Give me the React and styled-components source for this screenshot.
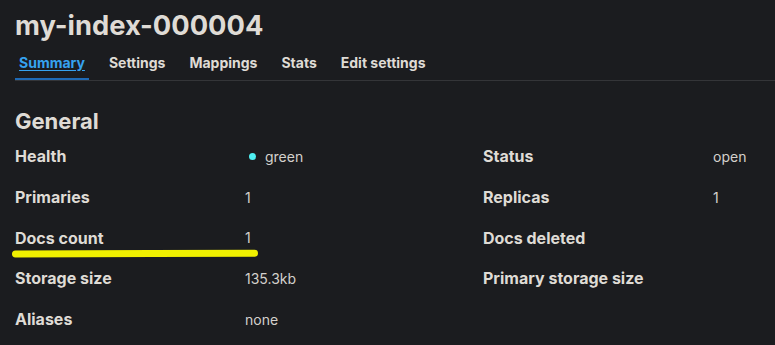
import React from 'react';
import styled, { createGlobalStyle } from 'styled-components';

const GlobalStyle = createGlobalStyle`
    body {
        margin: 0;
        background: #1b1c1f;
        font-family: Inter, "Liberation Sans", sans-serif;
        color: #dfdbd5;
    }
`;

const Page = styled.div`
    position: relative;
    padding: 9px 0 0 15px;
    height: 345px;
    box-sizing: border-box;
    overflow: hidden;
`;

const Title = styled.h1`
    margin: 0;
    font-size: 27.3px;
    line-height: 34px;
    font-weight: 700;
    color: #dfdbd5;
`;

const Tabs = styled.div`
    display: flex;
    gap: 16px;
    margin-top: 1px;
    border-bottom: 1px solid #343538;
`;

const Tab = styled.div`
    padding: 0 4px;
    height: 36px;
    display: flex;
    align-items: center;
    font-size: 14px;
    font-weight: 700;
    color: ${p => (p.$active ? '#36a2ef' : '#dfdbd5')};
    text-decoration: ${p => (p.$active ? 'underline' : 'none')};
    text-underline-offset: 2px;
    box-shadow: ${p => (p.$active ? 'inset 0 -2px 0 #1f6ab5' : 'none')};
`;

const SectionTitle = styled.h2`
    margin: 26px 0 0;
    font-size: 22px;
    line-height: 28px;
    font-weight: 700;
    color: #dfdbd5;
`;

const Grid = styled.div`
    display: grid;
    grid-template-columns: 230px 238px 230px auto;
    grid-auto-rows: 40.7px;
    margin-top: 1px;
    align-items: center;
`;

const Label = styled.div`
    font-size: 16px;
    font-weight: 700;
    color: #dfdbd5;
`;

const Value = styled.div`
    font-size: 14px;
    font-weight: 400;
    color: #d4d1cc;
    display: flex;
    align-items: center;
    gap: 9px;
`;

const Dot = styled.span`
    width: 7px;
    height: 7px;
    border-radius: 50%;
    background: #4ff0f2;
    margin-left: 4px;
`;

const Marker = styled.svg`
    position: absolute;
    left: 0;
    top: 244px;
    pointer-events: none;
`;

const rows = [
    ['Health', <><Dot /> green</>, 'Status', 'open'],
    ['Primaries', '1', 'Replicas', '1'],
    ['Docs count', '1', 'Docs deleted', ''],
    ['Storage size', '135.3kb', 'Primary storage size', ''],
    ['Aliases', 'none', '', ''],
];

const App = () => {
    return (
        <Page>
            <GlobalStyle />
            <Title>my-index-000004</Title>
            <Tabs>
                <Tab $active>Summary</Tab>
                <Tab>Settings</Tab>
                <Tab>Mappings</Tab>
                <Tab>Stats</Tab>
                <Tab>Edit settings</Tab>
            </Tabs>
            <SectionTitle>General</SectionTitle>
            <Grid>
                {rows.map((r, i) => (
                    <React.Fragment key={i}>
                        <Label>{r[0]}</Label>
                        <Value>{r[1]}</Value>
                        <Label>{r[2]}</Label>
                        <Value>{r[3]}</Value>
                    </React.Fragment>
                ))}
            </Grid>
            {/* highlighter stroke over docs count */}
            <Marker width="270" height="20" viewBox="0 0 270 20">
                <path d="M15.5 10 C 80 9.6, 180 9.3, 254.5 9.2" stroke="#f0f000" strokeWidth="7" strokeLinecap="round" fill="none" />
            </Marker>
        </Page>
    );
};

export default App;
